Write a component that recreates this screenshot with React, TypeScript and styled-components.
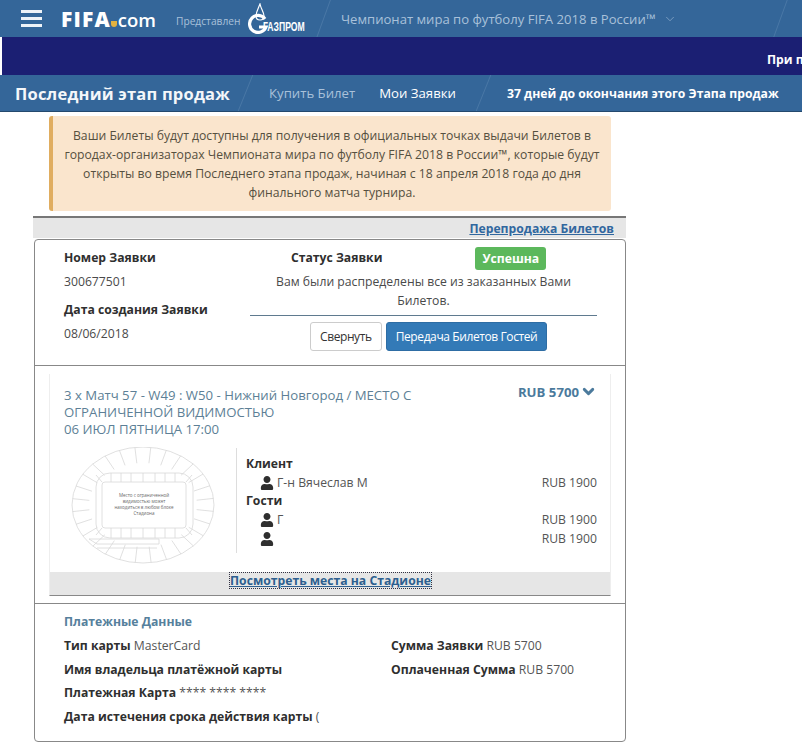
import { createGlobalStyle, styled } from "styled-components";
import { FaUser } from "react-icons/fa";
import { ChevronDown } from "lucide-react";

const GlobalStyle = createGlobalStyle`
    html, body {
        margin: 0;
        padding: 0;
        background: #fff;
    }
    body {
        font-family: "Open Sans", "Noto Sans", sans-serif;
        font-size: 12.2px;
        color: #444;
    }
`;

function StadiumMap() {
    const spokes = [];
    for (let i = 0; i < 28; i++) {
        const a = (i / 28) * Math.PI * 2 + 0.11;
        spokes.push(
            <line
                key={i}
                x1={72 + Math.cos(a) * 54}
                y1={58 + Math.sin(a) * 42}
                x2={72 + Math.cos(a) * 71}
                y2={58 + Math.sin(a) * 58}
            />
        );
    }
    const stands = [40, 50, 60, 72, 84, 94, 104];
    return (
        <svg width="144" height="118" viewBox="0 0 144 118" fill="none" stroke="#d8d8d8" strokeWidth="0.8">
            <ellipse cx="72" cy="58" rx="71" ry="58" />
            <rect x="25" y="26" width="97" height="65" rx="14" />
            <rect x="31" y="35" width="84" height="46" rx="3" />
            {spokes}
            {stands.map((x) => (
                <g key={x}>
                    <line x1={x} y1="26" x2={x} y2="35" />
                    <line x1={x} y1="81" x2={x} y2="91" />
                </g>
            ))}
            <path d="M31 35l-6-7M115 35l6-7M31 81l-6 7M115 81l6 7" />
            <path d="M18 92h70v5H26zM26 101h60" />
            <g fill="#666" stroke="none" fontSize="4.5" textAnchor="middle" fontFamily="'Open Sans', sans-serif">
                <text x="73" y="50">Место с ограниченной</text>
                <text x="73" y="56">видимостью может</text>
                <text x="73" y="62">находиться в любом блоке</text>
                <text x="73" y="68">Стадиона</text>
            </g>
        </svg>
    );
}

function GazpromFlame() {
    return (
        <svg width="26" height="31" viewBox="0 0 26 31" fill="none">
            <path d="M12 1c-2 5-4 8-4 12 0 3 2 4 4 4s4-1 4-4c0-4-3-7-4-12z" stroke="#fff" strokeWidth="1.2" />
            <path d="M17 16a8.5 8.5 0 1 0 1 8h-7" stroke="#fff" strokeWidth="3.2" />
        </svg>
    );
}

export default function App() {
    return (
        <>
            <GlobalStyle />
            <TopBar>
                <Burger>
                    <span />
                    <span />
                    <span />
                </Burger>
                <Logo>
                    FIFA<LogoDot />
                    <LogoCom>com</LogoCom>
                </Logo>
                <Sponsor>Представлен</Sponsor>
                <GazpromLogo>
                    <GazpromFlame />
                    <GazpromName>ГАЗПРОМ</GazpromName>
                </GazpromLogo>
                <Competition>
                    Чемпионат мира по футболу FIFA 2018 в России™
                    <ChevronDown size={14} strokeWidth={1} />
                </Competition>
            </TopBar>
            <NoticeBand>
                <NoticeText>При покупке Билетов</NoticeText>
            </NoticeBand>
            <SubNav>
                <PhaseTitle>Последний этап продаж</PhaseTitle>
                <NavLinks>
                    <NavItem>Купить Билет</NavItem>
                    <NavItem $active>Мои Заявки</NavItem>
                </NavLinks>
                <Countdown>37 дней до окончания этого Этапа продаж</Countdown>
            </SubNav>
            <Column>
                <Alert>
                    Ваши Билеты будут доступны для получения в официальных точках выдачи Билетов в
                    городах-организаторах Чемпионата мира по футболу FIFA 2018 в России™, которые будут
                    открыты во время Последнего этапа продаж, начиная с 18 апреля 2018 года до дня
                    финального матча турнира.
                </Alert>
                <ResaleBar>
                    <ResaleLink>Перепродажа Билетов</ResaleLink>
                </ResaleBar>
                <Card>
                    <Summary>
                        <SummaryLeft>
                            <Label>Номер Заявки</Label>
                            <Value>300677501</Value>
                            <DateLabel>Дата создания Заявки</DateLabel>
                            <DateValue>08/06/2018</DateValue>
                        </SummaryLeft>
                        <SummaryRight>
                            <StatusRow>
                                <Label>Статус Заявки</Label>
                                <StatusBadge>Успешна</StatusBadge>
                            </StatusRow>
                            <StatusText>Вам были распределены все из заказанных Вами Билетов.</StatusText>
                            <Actions>
                                <Button>Свернуть</Button>
                                <Button $primary>Передача Билетов Гостей</Button>
                            </Actions>
                        </SummaryRight>
                    </Summary>
                    <MatchSection>
                        <MatchBox>
                            <MatchHead>
                                <MatchTitle>
                                    3 x Матч 57 - W49 : W50 - Нижний Новгород / МЕСТО С ОГРАНИЧЕННОЙ ВИДИМОСТЬЮ
                                    <br />
                                    06 ИЮЛ ПЯТНИЦА 17:00
                                </MatchTitle>
                                <MatchPrice>
                                    RUB 5700
                                    <ChevronDown size={17} strokeWidth={4} />
                                </MatchPrice>
                            </MatchHead>
                            <MatchBody>
                                <StadiumMap />
                                <Seats>
                                    <Label>Клиент</Label>
                                    <SeatRow>
                                        <FaUser size={14} />
                                        <SeatName>Г-н Вячеслав М</SeatName>
                                        <span>RUB 1900</span>
                                    </SeatRow>
                                    <Label>Гости</Label>
                                    <SeatRow>
                                        <FaUser size={14} />
                                        <SeatName>Г</SeatName>
                                        <span>RUB 1900</span>
                                    </SeatRow>
                                    <SeatRow>
                                        <FaUser size={14} />
                                        <SeatName />
                                        <span>RUB 1900</span>
                                    </SeatRow>
                                </Seats>
                            </MatchBody>
                            <MatchFooter>
                                <StadiumLink>Посмотреть места на Стадионе</StadiumLink>
                            </MatchFooter>
                        </MatchBox>
                    </MatchSection>
                    <Payment>
                        <PaymentTitle>Платежные Данные</PaymentTitle>
                        <PaymentGrid>
                            <PaymentCol>
                                <PaymentLine>
                                    <b>Тип карты</b> MasterCard
                                </PaymentLine>
                                <PaymentLine>
                                    <b>Имя владельца платёжной карты</b>
                                </PaymentLine>
                                <PaymentLine>
                                    <b>Платежная Карта</b> **** **** ****
                                </PaymentLine>
                                <PaymentLine>
                                    <b>Дата истечения срока действия карты</b> (
                                </PaymentLine>
                            </PaymentCol>
                            <PaymentCol>
                                <PaymentLine>
                                    <b>Сумма Заявки</b> RUB 5700
                                </PaymentLine>
                                <PaymentLine>
                                    <b>Оплаченная Сумма</b> RUB 5700
                                </PaymentLine>
                            </PaymentCol>
                        </PaymentGrid>
                    </Payment>
                </Card>
            </Column>
        </>
    );
}

const TopBar = styled.header`
    position: relative;
    display: flex;
    align-items: center;
    height: 37px;
    padding-left: 21px;
    background: #346699;
    overflow: hidden;
    &::after {
        content: "";
        position: absolute;
        top: 0;
        bottom: 0;
        left: 780px;
        border-left: 1px solid #4a78a6;
        transform: skewX(-20deg);
    }
`;

const Burger = styled.div`
    display: flex;
    flex-direction: column;
    gap: 4px;
    width: 21px;
    span {
        height: 3px;
        background: #eef3f8;
    }
`;

const Logo = styled.div`
    display: flex;
    align-items: baseline;
    width: 95px;
    margin-left: 19px;
    font-size: 21px;
    font-weight: 800;
    letter-spacing: 1.2px;
    color: #fff;
`;

const LogoDot = styled.i`
    width: 7px;
    height: 6px;
    margin: 0 1px 0 0;
    border-radius: 0 0 5px 5px;
    background: #e3b341;
`;

const LogoCom = styled.span`
    font-size: 18.5px;
    font-weight: 600;
    letter-spacing: 0;
`;

const Sponsor = styled.span`
    margin-left: 20px;
    padding-top: 5px;
    width: 63px;
    font-size: 10.2px;
    color: #a9c1da;
    white-space: nowrap;
`;

const GazpromLogo = styled.div`
    display: flex;
    align-items: flex-end;
    width: 57px;
    height: 31px;
    margin-left: 9px;
`;

const GazpromName = styled.span`
    display: inline-block;
    margin-left: -11px;
    width: 42px;
    font-family: "Liberation Sans", sans-serif;
    font-size: 12px;
    font-weight: 700;
    color: #fff;
    transform: scaleX(0.72);
    transform-origin: left;
    white-space: nowrap;
`;

const Competition = styled.div`
    position: relative;
    display: flex;
    align-items: center;
    gap: 7px;
    margin-left: 18px;
    padding-left: 18px;
    font-size: 13.1px;
    color: #a9c1da;
    white-space: nowrap;
    &::before {
        content: "";
        position: absolute;
        top: -10px;
        bottom: -10px;
        left: 0;
        border-left: 1px solid #4a78a6;
        transform: skewX(-20deg);
    }
`;

const NoticeBand = styled.div`
    display: flex;
    align-items: flex-end;
    height: 38px;
    margin-left: 2px;
    overflow: hidden;
    background: #1b1f73;
`;

const NoticeText = styled.span`
    padding: 0 0 7px 765px;
    font-size: 12.2px;
    font-weight: 700;
    color: #fff;
    white-space: nowrap;
`;

const SubNav = styled.nav`
    display: flex;
    align-items: center;
    height: 37px;
    background: #346699;
    border-bottom: 1px solid #24496e;
    box-sizing: border-box;
    overflow: hidden;
`;

const PhaseTitle = styled.h1`
    width: 231px;
    margin: 0;
    padding-left: 15px;
    box-sizing: border-box;
    font-size: 16.5px;
    font-weight: 700;
    letter-spacing: 0.2px;
    color: #f4f7fa;
    white-space: nowrap;
`;

const NavLinks = styled.div`
    position: relative;
    display: flex;
    gap: 24px;
    height: 100%;
    align-items: center;
    padding-left: 38px;
    width: 245px;
    box-sizing: border-box;
    &::before,
    &::after {
        content: "";
        position: absolute;
        top: 0;
        bottom: 0;
        border-left: 1px solid #4a78a6;
        transform: skewX(-22deg);
    }
    &::before {
        left: 14px;
    }
    &::after {
        left: 252px;
    }
`;

const NavItem = styled.a<{ $active?: boolean }>`
    font-size: 13.2px;
    color: ${(p) => (p.$active ? "#fff" : "#a9c1da")};
    white-space: nowrap;
`;

const Countdown = styled.span`
    margin-left: 31px;
    font-size: 12.2px;
    font-weight: 700;
    color: #fff;
    white-space: nowrap;
`;

const Column = styled.main`
    width: 593px;
    margin-left: 33px;
`;

const Alert = styled.div`
    margin: 4px 15px 5px 16px;
    padding: 10px 6px 9px 6px;
    border-left: 4px solid #e0ad60;
    border-radius: 3px;
    background: #fae5cd;
    font-size: 12.2px;
    line-height: 19px;
    color: #56503f;
    text-align: center;
`;

const ResaleBar = styled.div`
    height: 22px;
    padding-right: 12px;
    border-top: 2px solid #777;
    background: #e6e6e6;
    box-sizing: border-box;
    text-align: right;
`;

const ResaleLink = styled.a`
    font-size: 12.2px;
    font-weight: 700;
    line-height: 21px;
    color: #31679f;
    text-decoration: underline;
`;

const Card = styled.section`
    margin: 1px 0 0 1px;
    border: 1px solid #888;
    border-radius: 4px;
    background: #fff;
`;

const Summary = styled.div`
    display: flex;
    height: 126px;
    box-sizing: border-box;
    border-bottom: 1px solid #888;
`;

const SummaryLeft = styled.div`
    width: 215px;
    padding: 9px 0 0 29px;
    box-sizing: border-box;
`;

const Label = styled.div`
    font-size: 12.2px;
    font-weight: 700;
    line-height: 18px;
    color: #2f2f2f;
`;

const Value = styled.div`
    margin-top: 6px;
    font-size: 12.2px;
    line-height: 18px;
    color: #4a4a4a;
`;

const DateLabel = styled(Label)`
    margin-top: 10px;
`;

const DateValue = styled(Value)`
    margin-top: 6px;
`;

const SummaryRight = styled.div`
    width: 347px;
    padding-top: 6px;
    text-align: center;
`;

const StatusRow = styled.div`
    display: flex;
    align-items: center;
    height: 24px;
    padding-left: 41px;
`;

const StatusBadge = styled.span`
    display: inline-block;
    margin-left: 93px;
    padding: 0 7px;
    height: 23px;
    line-height: 23px;
    border-radius: 3px;
    background: #5cb85c;
    font-size: 12.2px;
    font-weight: 700;
    color: #fff;
`;

const StatusText = styled.div`
    padding: 2px 10px 5px;
    border-bottom: 1px solid #5f7a8f;
    font-size: 12.2px;
    line-height: 19px;
    color: #4a4a4a;
`;

const Actions = styled.div`
    display: flex;
    gap: 4px;
    margin-top: 6px;
    padding-left: 60px;
`;

const Button = styled.button<{ $primary?: boolean }>`
    height: 29px;
    padding: 0 9px;
    border: 1px solid ${(p) => (p.$primary ? "#2e6da4" : "#ccc")};
    border-radius: 3px;
    background: ${(p) => (p.$primary ? "#337ab7" : "#fff")};
    color: ${(p) => (p.$primary ? "#fff" : "#333")};
    font-family: inherit;
    font-size: 12px;
    letter-spacing: -0.4px;
`;

const MatchSection = styled.div`
    padding: 8px 14px 7px 14px;
    border-bottom: 1px solid #888;
`;

const MatchBox = styled.div`
    border-left: 1px solid #eee;
    border-right: 1px solid #eee;
    border-bottom: 1px solid #888;
`;

const MatchHead = styled.div`
    display: flex;
    justify-content: space-between;
    padding: 13px 13px 0 14px;
`;

const MatchTitle = styled.div`
    width: 370px;
    font-size: 13.2px;
    line-height: 17px;
    color: #5d7f96;
`;

const MatchPrice = styled.div`
    display: flex;
    align-items: center;
    gap: 1px;
    height: 17px;
    margin-top: -4px;
    font-size: 13.2px;
    font-weight: 700;
    color: #4b7a9c;
    white-space: nowrap;
`;

const MatchBody = styled.div`
    display: flex;
    align-items: flex-start;
    gap: 21px;
    height: 125px;
    padding: 9px 13px 0 21px;
`;

const Seats = styled.div`
    flex: 1;
    height: 98px;
    margin-top: 1px;
    padding: 7px 0 0 9px;
    border-left: 1px solid #ddd;
`;

const SeatRow = styled.div`
    display: flex;
    align-items: center;
    height: 19px;
    padding-left: 14px;
    font-size: 12.2px;
    color: #555;
    svg {
        color: #2f2f2f;
        flex-shrink: 0;
    }
`;

const SeatName = styled.span`
    flex: 1;
    margin-left: 3px;
`;

const MatchFooter = styled.div`
    height: 23px;
    padding-left: 180px;
    background: #e6e6e6;
`;

const StadiumLink = styled.a`
    display: inline-block;
    margin-top: 1px;
    outline: 1px dotted #334;
    font-size: 12.2px;
    font-weight: 700;
    line-height: 15px;
    color: #2d5f8f;
    text-decoration: underline;
`;

const Payment = styled.div`
    height: 137px;
    padding: 9px 0 0 29px;
    box-sizing: border-box;
`;

const PaymentTitle = styled.div`
    font-size: 12.2px;
    font-weight: 700;
    line-height: 18px;
    color: #56809c;
`;

const PaymentGrid = styled.div`
    display: grid;
    grid-template-columns: 327px 1fr;
    margin-top: 6px;
`;

const PaymentCol = styled.div`
    display: flex;
    flex-direction: column;
    gap: 5.67px;
`;

const PaymentLine = styled.div`
    font-size: 12.2px;
    line-height: 18px;
    color: #555;
    white-space: nowrap;
    b {
        color: #2f2f2f;
    }
`;
